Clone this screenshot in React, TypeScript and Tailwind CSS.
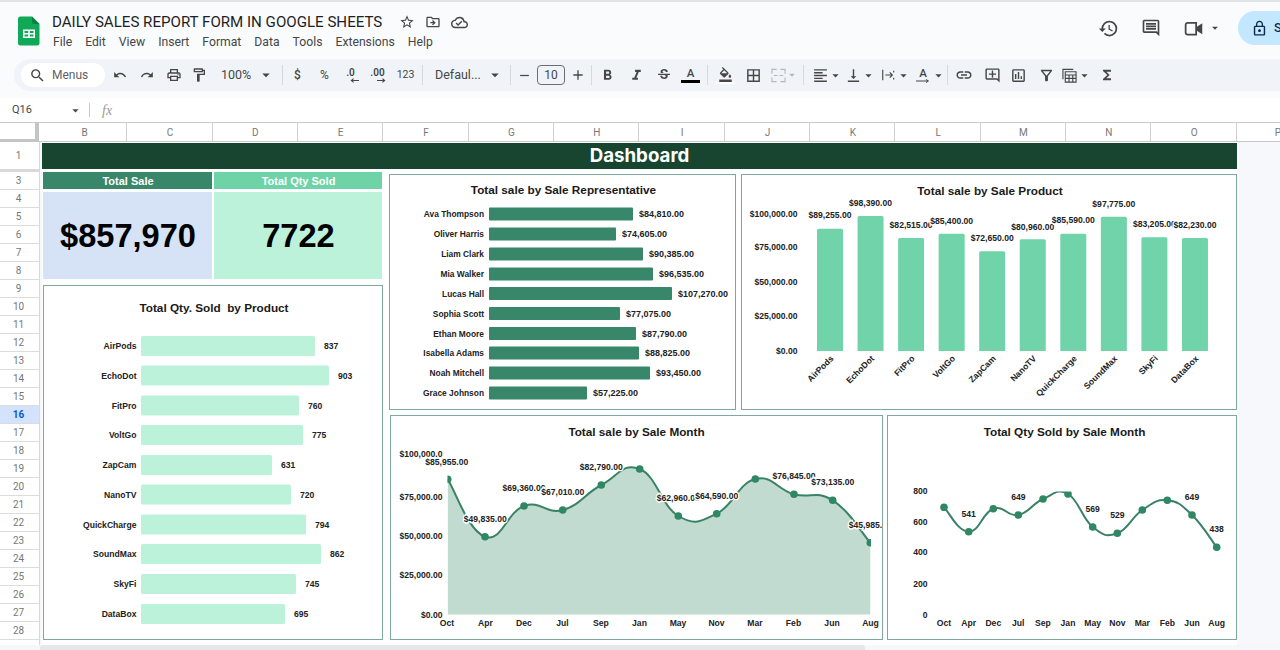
import React from 'react';
import {
    MdStarBorder, MdOutlineDriveFileMove, MdOutlineCloudDone, MdHistory, MdOutlineComment,
    MdArrowDropDown, MdLockOutline, MdSearch, MdUndo, MdRedo, MdOutlinePrint, MdOutlineFormatPaint, MdAdd, MdRemove,
    MdFormatBold, MdFormatItalic, MdStrikethroughS, MdOutlineFormatColorFill, MdBorderAll, MdFormatAlignLeft,
    MdVerticalAlignBottom, MdLink, MdOutlineAddComment, MdOutlineAssessment, MdOutlineFilterAlt, MdFunctions,
} from 'react-icons/md';

const columns = ['B', 'C', 'D', 'E', 'F', 'G', 'H', 'I', 'J', 'K', 'L', 'M', 'N', 'O'];
const rows = Array.from({length: 26}, (_, i) => i + 3);
const menu = ['File', 'Edit', 'View', 'Insert', 'Format', 'Data', 'Tools', 'Extensions', 'Help'];

const reps = [
    ['Ava Thompson', 214, 633, '$84,810.00'], ['Oliver Harris', 234, 616, '$74,605.00'],
    ['Liam Clark', 254, 643, '$90,385.00'], ['Mia Walker', 274, 653, '$96,535.00'],
    ['Lucas Hall', 293.5, 672, '$107,270.00'], ['Sophia Scott', 313.5, 620, '$77,075.00'],
    ['Ethan Moore', 333.5, 636, '$87,790.00'], ['Isabella Adams', 353, 639, '$88,825.00'],
    ['Noah Mitchell', 373, 650, '$93,450.00'], ['Grace Johnson', 393, 587, '$57,225.00'],
] as const;

const qtyProducts = [
    ['AirPods', 346, 315, '837'], ['EchoDot', 375.6, 329, '903'], ['FitPro', 405.6, 299, '760'],
    ['VoltGo', 435, 303, '775'], ['ZapCam', 465, 272, '631'], ['NanoTV', 494.6, 291, '720'],
    ['QuickCharge', 524.6, 306, '794'], ['SoundMax', 554, 321, '862'], ['SkyFi', 584, 296, '745'],
    ['DataBox', 614, 285, '695'],
] as const;

const saleProducts = [
    ['AirPods', 228.7, '$89,255.00', 214.7], ['EchoDot', 216, '$98,390.00', 203], ['FitPro', 238, '$82,515.00', 225],
    ['VoltGo', 233.7, '$85,400.00', 221], ['ZapCam', 251.3, '$72,650.00', 238], ['NanoTV', 239.3, '$80,960.00', 227],
    ['QuickCharge', 233.7, '$85,590.00', 220], ['SoundMax', 216.7, '$97,775.00', 203.7], ['SkyFi', 237.3, '$83,205.00', 224],
    ['DataBox', 238, '$82,230.00', 224.7],
] as const;

const months = ['Oct', 'Apr', 'Dec', 'Jul', 'Sep', 'Jan', 'May', 'Nov', 'Mar', 'Feb', 'Jun', 'Aug'];

const salePoints: [number, number][] = [
    [447.7, 479.3], [485, 536.7], [524, 506], [562.7, 510], [601.3, 485], [639.7, 469],
    [678.3, 516], [716.7, 513.7], [755.3, 479], [794, 494.3], [832.7, 500.3], [870.3, 542.7],
];
const saleLabels = [
    ['$69,360.00', 524, 488], ['$67,010.00', 562.7, 492], ['$85,955.00', 446.7, 462.3], ['$49,835.00', 485.3, 519],
    ['$82,790.00', 601.3, 467.3], ['$62,960.00', 678.3, 498], ['$64,590.00', 716.7, 495.7],
    ['$76,845.00', 794, 476], ['$73,135.00', 832.7, 482.3], ['$45,985.00', 870.3, 525],
] as const;

const qtyPoints: [number, number][] = [
    [944, 507.3], [968.7, 531.7], [993.3, 508.7], [1018.3, 515], [1043, 499], [1068, 494],
    [1092.7, 527], [1117.3, 533.3], [1142.3, 510], [1167.3, 500.3], [1192, 515], [1216.7, 547.3],
];
const qtyLabels = [
    ['541', 968.7, 513.7], ['649', 1018.3, 497.3], ['569', 1092.7, 509.3],
    ['529', 1117.3, 515], ['649', 1192, 497.3], ['438', 1216.7, 529.3],
] as const;

// catmull-rom through the points, same look as the sheets "smooth" line
function smooth(points: [number, number][]) {
    const k = 4.5;
    let d = `M${points[0][0]} ${points[0][1]}`;
    for (let i = 0; i < points.length - 1; i++) {
        const p0 = points[Math.max(i - 1, 0)];
        const p1 = points[i];
        const p2 = points[i + 1];
        const p3 = points[Math.min(i + 2, points.length - 1)];
        d += ` C${p1[0] + (p2[0] - p0[0]) / k} ${p1[1] + (p2[1] - p0[1]) / k} ${p2[0] - (p3[0] - p1[0]) / k} ${p2[1] - (p3[1] - p1[1]) / k} ${p2[0]} ${p2[1]}`;
    }
    return d;
}

const label = "fill-[#222222] text-[8.6px] font-bold";
const repLabel = "fill-[#222222] text-[8.4px] font-bold";
const repValue = "fill-[#222222] text-[9px] font-bold";
const halo = "fill-[#222222] text-[8.6px] font-bold stroke-white stroke-[2.5px] [paint-order:stroke]";

function ChartTitle({x, y, children}: { x: number, y: number, children: React.ReactNode }) {
    return <text x={x} y={y} textAnchor="middle" dominantBaseline="central" className="fill-[#1a1a1a] text-[11.75px] font-bold">{children}</text>;
}

function RepChart() {
    return (
        <svg viewBox="390 175 345 234" className="w-full h-full">
            <ChartTitle x={563.5} y={189}>Total sale by Sale Representative</ChartTitle>
            {reps.map(([name, y, end, value]) => (
                <g key={name}>
                    <text x={484} y={y} textAnchor="end" dominantBaseline="central" className={repLabel}>{name}</text>
                    <rect x={489} y={y - 6.5} width={end - 489} height={13} rx={1} className="fill-[#38876a]"/>
                    <text x={end + 6} y={y} dominantBaseline="central" className={repValue}>{value}</text>
                </g>
            ))}
        </svg>
    );
}

function QtyProductChart() {
    return (
        <svg viewBox="44 286 338 353" className="w-full h-full">
            <ChartTitle x={214} y={307}>Total Qty. Sold&#160; by Product</ChartTitle>
            {qtyProducts.map(([name, y, end, value]) => (
                <g key={name}>
                    <text x={136.5} y={y} textAnchor="end" dominantBaseline="central" className={label}>{name}</text>
                    <rect x={141} y={y - 10} width={end - 141} height={20} rx={1.5} className="fill-[#bcf2d9]"/>
                    <text x={end + 9} y={y} dominantBaseline="central" className={label}>{value}</text>
                </g>
            ))}
        </svg>
    );
}

function SaleProductChart() {
    const ticks = [['$100,000.00', 213.7], ['$75,000.00', 247.3], ['$50,000.00', 281.7], ['$25,000.00', 316.3], ['$0.00', 351]] as const;
    return (
        <svg viewBox="742 175 494 234" className="w-full h-full">
            <ChartTitle x={990} y={190}>Total sale by Sale Product</ChartTitle>
            {ticks.map(([t, y]) => (
                <text key={t} x={797.5} y={y} textAnchor="end" dominantBaseline="central" className={label}>{t}</text>
            ))}
            {saleProducts.map(([name, top], i) => {
                const cx = 830 + 40.55 * i;
                return (
                    <g key={name}>
                        <path d={`M${cx - 13} 351 V${top + 1.5} Q${cx - 13} ${top} ${cx - 11.5} ${top} H${cx + 11.5} Q${cx + 13} ${top} ${cx + 13} ${top + 1.5} V351 Z`} className="fill-[#70d3a9]"/>
                        <text x={cx + 2} y={357} textAnchor="end" dominantBaseline="central" transform={`rotate(-45 ${cx + 2} 357)`} className={label}>{name}</text>
                    </g>
                );
            })}
            {saleProducts.map(([name, , value, y], i) => (
                <text key={name} x={830 + 40.55 * i} y={y} textAnchor="middle" dominantBaseline="central" className={halo}>{value}</text>
            ))}
        </svg>
    );
}

function SaleMonthChart() {
    const ticks = [['$100,000.0', 453.7], ['$75,000.00', 497], ['$50,000.00', 536], ['$25,000.00', 575], ['$0.00', 614.5]] as const;
    const line = smooth(salePoints);
    return (
        <svg viewBox="391 416 491 223" className="w-full h-full">
            <defs>
                <clipPath id="saleClip"><rect x="447.5" y="440" width="423.5" height="175"/></clipPath>
            </defs>
            <ChartTitle x={636.5} y={431.5}>Total sale by Sale Month</ChartTitle>
            {ticks.map(([t, y]) => (
                <text key={t} x={442.5} y={y} textAnchor="end" dominantBaseline="central" className={label}>{t}</text>
            ))}
            <g clipPath="url(#saleClip)">
                <path d={`${line} V614.5 H447.7 Z`} className="fill-[#c1dbd0]"/>
                <path d={line} className="fill-none stroke-[#3a8266] stroke-2"/>
                {salePoints.map(([x, y]) => <circle key={x} cx={x} cy={y} r={3.8} className="fill-[#2f8763]"/>)}
            </g>
            {saleLabels.map(([t, x, y]) => (
                <text key={t} x={x} y={y} textAnchor="middle" dominantBaseline="central" className={halo}>{t}</text>
            ))}
            {months.map((m, i) => (
                <text key={m} x={447 + 38.5 * i} y={623} textAnchor="middle" dominantBaseline="central" className={label}>{m}</text>
            ))}
        </svg>
    );
}

function QtyMonthChart() {
    const ticks = [['800', 491], ['600', 521.7], ['400', 552], ['200', 583.7], ['0', 614.7]] as const;
    return (
        <svg viewBox="888 416 348 223" className="w-full h-full">
            <defs>
                <clipPath id="qtyClip"><rect x="930" y="491.5" width="300" height="123"/></clipPath>
            </defs>
            <ChartTitle x={1064.5} y={431.5}>Total Qty Sold by Sale Month</ChartTitle>
            {ticks.map(([t, y]) => (
                <text key={t} x={927.5} y={y} textAnchor="end" dominantBaseline="central" className={label}>{t}</text>
            ))}
            <g clipPath="url(#qtyClip)">
                <path d={smooth(qtyPoints)} className="fill-none stroke-[#3a8266] stroke-2"/>
                {qtyPoints.map(([x, y]) => <circle key={x} cx={x} cy={y} r={3.8} className="fill-[#2f8763]"/>)}
            </g>
            {qtyLabels.map(([t, x, y]) => (
                <text key={x} x={x} y={y} textAnchor="middle" dominantBaseline="central" className={label}>{t}</text>
            ))}
            {months.map((m, i) => (
                <text key={m} x={qtyPoints[i][0]} y={623} textAnchor="middle" dominantBaseline="central" className={label}>{m}</text>
            ))}
        </svg>
    );
}

function SheetsLogo() {
    return (
        <svg viewBox="0 0 22 30" className="w-[22px] h-[30px]">
            <path d="M2.5 0.5H14L21.5 8V27a2.5 2.5 0 0 1-2.5 2.5H2.5A2.5 2.5 0 0 1 0 27V3A2.5 2.5 0 0 1 2.5 .5Z" fill="#0fa958"/>
            <path d="M14 0.5L21.5 8H16a2 2 0 0 1-2-2Z" fill="#0b8043"/>
            <path d="M5 13.5H17V22H5ZM6.5 15V17H10.2V15ZM11.8 15V17H15.5V15ZM6.5 18.5V20.5H10.2V18.5ZM11.8 18.5V20.5H15.5V18.5Z" fill="#fff" fillRule="evenodd"/>
        </svg>
    );
}

function Btn({w = 'w-[27px]', children}: { w?: string, children: React.ReactNode }) {
    return <div className={`${w} h-full flex items-center justify-center shrink-0`}>{children}</div>;
}

function Sep() {
    return <div className="w-px h-[20px] bg-[#d5d9dd] shrink-0"/>;
}

function Caret({className = ''}: { className?: string }) {
    return <MdArrowDropDown className={`text-[18px] shrink-0 ${className}`}/>;
}

function Toolbar() {
    return (
        <div className="h-[32px] ml-[14px] rounded-l-[16px] bg-[#f0f4f9] flex items-center text-[#444746] mt-[1px]">
            <div className="ml-[7px] w-[84px] h-[24px] rounded-full bg-white flex items-center pl-[8px] gap-[6px] shrink-0">
                <MdSearch className="text-[17px]"/>
                <span className="text-[12px] text-[#5f6368]">Menus</span>
            </div>
            <Btn w="w-[29px]"><MdUndo className="text-[14px]"/></Btn>
            <Btn w="w-[26px]"><MdRedo className="text-[14px]"/></Btn>
            <Btn><MdOutlinePrint className="text-[16px]"/></Btn>
            <Btn w="w-[24px]"><MdOutlineFormatPaint className="text-[16px]"/></Btn>
            <div className="w-[71px] flex items-center pl-[10px] shrink-0">
                <span className="text-[12.5px]">100%</span>
                <Caret className="ml-[6px]"/>
            </div>
            <Sep/>
            <Btn w="w-[29px]"><span className="text-[12px] font-medium">$</span></Btn>
            <Btn w="w-[25px]"><span className="text-[12px]">%</span></Btn>
            <Btn>
                <div className="flex flex-col items-center leading-none">
                    <span className="text-[10px] font-semibold leading-[10px]">.0</span>
                    <svg viewBox="0 0 10 5" className="w-[9px] h-[5px] ml-[8px]"><path d="M10 2.5H2M4 .5L1.5 2.5 4 4.5" fill="none" stroke="#444746" strokeWidth="1.2"/></svg>
                </div>
            </Btn>
            <Btn>
                <div className="flex flex-col items-center leading-none">
                    <span className="text-[10px] font-semibold leading-[10px]">.00</span>
                    <svg viewBox="0 0 10 5" className="w-[9px] h-[5px] ml-[8px]"><path d="M0 2.5H8M6 .5L8.5 2.5 6 4.5" fill="none" stroke="#444746" strokeWidth="1.2"/></svg>
                </div>
            </Btn>
            <Btn w="w-[29px]"><span className="text-[10.5px]">123</span></Btn>
            <div className="ml-[2px]"><Sep/></div>
            <div className="w-[87px] flex items-center pl-[12px] shrink-0">
                <span className="text-[12.5px] w-[51px]">Defaul...</span>
                <Caret/>
            </div>
            <Sep/>
            <Btn w="w-[26px]"><MdRemove className="text-[15px]"/></Btn>
            <div className="w-[28px] h-[20px] rounded-[4px] border border-[#6b6f72] flex items-center justify-center text-[12px] shrink-0">10</div>
            <Btn w="w-[26px]"><MdAdd className="text-[16px]"/></Btn>
            <Sep/>
            <Btn w="w-[31px]"><MdFormatBold className="text-[17px]"/></Btn>
            <Btn><MdFormatItalic className="text-[17px]"/></Btn>
            <Btn><MdStrikethroughS className="text-[16px]"/></Btn>
            <Btn>
                <div className="flex flex-col items-center">
                    <span className="text-[11.5px] leading-[13px] font-medium">A</span>
                    <div className="w-[19px] h-[3px] bg-black"/>
                </div>
            </Btn>
            <div className="ml-[3px]"><Sep/></div>
            <Btn w="w-[34px]">
                <div className="flex flex-col items-center">
                    <MdOutlineFormatColorFill className="text-[15px]"/>
                    <div className="w-[19px] h-[2px] bg-white"/>
                </div>
            </Btn>
            <Btn w="w-[22px]"><MdBorderAll className="text-[17px]"/></Btn>
            <Btn w="w-[37px]">
                <svg viewBox="0 0 16 16" className="w-[15px] h-[15px]"><path d="M1 6V1.5H6M10 1.5H15V6M1 10V14.5H6M10 14.5H15V10M3 8H7M13 8H9" fill="none" stroke="#b4b8bb" strokeWidth="1.2"/></svg>
                <Caret className="text-[#b4b8bb] -ml-[1px] -mr-[4px] !text-[14px]"/>
            </Btn>
            <div className="w-[2px]"/>
            <Sep/>
            <div className="w-[39px] flex items-center pl-[8px] shrink-0">
                <MdFormatAlignLeft className="text-[17px] shrink-0"/>
                <Caret className="!text-[15px] -ml-[1px]"/>
            </div>
            <div className="w-[37px] flex items-center pl-[2px] shrink-0">
                <MdVerticalAlignBottom className="text-[17px] shrink-0"/>
                <Caret className="!text-[15px] -ml-[1px]"/>
            </div>
            <div className="w-[35px] flex items-center pl-[1px] shrink-0">
                <svg viewBox="0 0 16 16" className="w-[14px] h-[14px] shrink-0"><path d="M2 2V14M5 8H13M10 5L13 8 10 11M14.5 3V5M14.5 11V13" fill="none" stroke="#444746" strokeWidth="1.3"/></svg>
                <Caret className="!text-[15px] ml-[1px]"/>
            </div>
            <div className="w-[32px] flex items-center shrink-0">
                <div className="flex flex-col items-center w-[16px] shrink-0">
                    <span className="text-[11.5px] leading-[11px] font-medium">A</span>
                    <svg viewBox="0 0 14 4" className="w-[14px] h-[4px]"><path d="M0 2H12M10 .5L12.5 2 10 3.5" fill="none" stroke="#444746" strokeWidth="1"/></svg>
                </div>
                <Caret className="!text-[15px]"/>
            </div>
            <Sep/>
            <Btn w="w-[31px]"><MdLink className="text-[18px]"/></Btn>
            <Btn w="w-[26px]"><MdOutlineAddComment className="text-[17px]"/></Btn>
            <Btn><MdOutlineAssessment className="text-[17px]"/></Btn>
            <Btn w="w-[28px]"><MdOutlineFilterAlt className="text-[17px]"/></Btn>
            <div className="w-[36px] flex items-center pl-[2px] shrink-0">
                <svg viewBox="0 0 16 16" className="w-[15px] h-[15px] shrink-0"><path d="M1 12V1.5H12M3.5 4H15V15H3.5ZM3.5 7.5H15M3.5 11H15M7.5 7.5V15M11.5 7.5V15" fill="none" stroke="#444746" strokeWidth="1.2"/></svg>
                <Caret className="!text-[15px]"/>
            </div>
            <Btn w="w-[21px]"><MdFunctions className="text-[16px]"/></Btn>
        </div>
    );
}

function Header() {
    return (
        <div className="h-[98px] bg-[#f9fbfd] border-t-2 border-[#e3e3e3] shrink-0 overflow-hidden">
            <div className="h-[56px] flex">
                <div className="pl-[18px] pr-[12px] pt-[14px] shrink-0"><SheetsLogo/></div>
                <div className="pt-[10px] shrink-0">
                    <div className="flex items-center h-[20px]">
                        <span className="text-[15.1px] text-[#1f1f1f]">DAILY SALES REPORT FORM IN GOOGLE SHEETS</span>
                        <div className="flex items-center gap-[10px] ml-[17px] text-[#444746]">
                            <MdStarBorder className="text-[16px]"/>
                            <MdOutlineDriveFileMove className="text-[16px]"/>
                            <MdOutlineCloudDone className="text-[17px]"/>
                        </div>
                    </div>
                    <div className="flex gap-[13px] text-[12.2px] text-[#444746] mt-[1px] ml-[1px]">
                        {menu.map(m => <span key={m}>{m}</span>)}
                    </div>
                </div>
                <div className="ml-auto flex items-center h-[52px] text-[#444746] shrink-0 -mr-[20px]">
                    <MdHistory className="text-[21px] mr-[22px]"/>
                    <MdOutlineComment className="text-[20px] mr-[22px]"/>
                    <svg viewBox="0 0 24 24" className="w-[21px] h-[21px] shrink-0">
                        <path d="M3 8a2.5 2.5 0 0 1 2.5-2.5H15V19H5.5A2.5 2.5 0 0 1 3 16.5Z" fill="none" stroke="#444746" strokeWidth="2"/>
                        <path d="M15 10.5L22 6V18.500L15 14Z" fill="#444746"/>
                    </svg>
                    <Caret className="!text-[14px] ml-[4px] mr-[16px]"/>
                    <div className="w-[62px] h-[34px] rounded-l-full bg-[#c2e7ff] flex items-center pl-[13px] gap-[6px] text-[#0b2b4a]">
                        <MdLockOutline className="text-[17px] shrink-0"/>
                        <span className="text-[13px] font-medium">Share</span>
                    </div>
                </div>
            </div>
            <Toolbar/>
        </div>
    );
}

function FormulaBar() {
    return (
        <div className="h-[24px] bg-white flex items-center shrink-0 text-[#444746]">
            <span className="text-[11px] pl-[12px] w-[68px]">Q16</span>
            <Caret className="!text-[15px]"/>
            <div className="w-px h-[14px] bg-[#c7c7c7] ml-[6px]"/>
            <span className="ml-[12px] text-[14px] italic font-['Liberation_Serif',serif] text-[#9a9a9a]">fx</span>
        </div>
    );
}

function ColumnHeader() {
    return (
        <div className="h-[20px] flex shrink-0 border-t border-b border-[#c9c9c9] bg-white">
            <div className="w-[39px] bg-white border-r-[4px] border-b-[3px] border-[#c4c4c4] shrink-0 -mb-px"/>
            <div className="w-[3px] shrink-0"/>
            {columns.map(c => (
                <div key={c} className="w-[85.35px] shrink-0 border-r border-[#d0d0d0] flex items-center justify-center pl-[1px] text-[10px] text-[#777]">{c}</div>
            ))}
            <div className="flex-1 pl-[38px] flex items-center text-[10px] text-[#777]">P</div>
        </div>
    );
}

function RowHeader() {
    return (
        <div className="w-[40px] shrink-0 bg-white border-r border-[#d8d8d8]">
            <div className="h-[30px] border-b-[3px] border-[#d8d8d8] flex items-center justify-center pr-[2px] text-[10px] text-[#777]">1</div>
            {rows.map(r => (
                <div key={r} className={r === 16
                    ? "h-[18px] bg-[#d3e3fd] border-b border-[#dcdcdc] flex items-center justify-center pr-[2px] text-[10px] font-bold text-[#0b57d0]"
                    : "h-[18px] border-b border-[#dcdcdc] flex items-center justify-center pr-[2px] text-[10px] text-[#777]"}>{r}</div>
            ))}
        </div>
    );
}

function Card({className, children}: { className: string, children: React.ReactNode }) {
    return <div className={`${className} bg-white border border-[#7fa89e] shrink-0`}>{children}</div>;
}

function Dashboard() {
    return (
        <div className="flex-1 bg-[#f6f8fb] min-w-0">
            <div className="w-[1195px] ml-[2px] pt-px bg-white font-['Liberation_Sans',Arial,sans-serif] pb-[5px]">
                <div className="h-[26px] bg-[#17452f] flex items-center justify-center text-white text-[18.7px] font-bold font-['Inter',sans-serif]">Dashboard</div>
                <div className="flex pt-[3px] pl-[1px]">
                    <div className="w-[340px] shrink-0 flex flex-col">
                        <div className="grid grid-cols-[169px_168px] gap-x-[2px] gap-y-[3px] text-center">
                            <div className="h-[17px] bg-[#38876a] text-white text-[11px] font-bold flex items-center justify-center pl-[1px] pt-[1px]">Total Sale</div>
                            <div className="h-[17px] bg-[#6fd3a8] text-white text-[11px] font-bold flex items-center justify-center pl-[1px] pt-[1px]">Total Qty Sold</div>
                            <div className="h-[87px] bg-[#d6e3f6] text-black text-[32.6px] font-bold flex items-center justify-center pl-[1px] pt-[2px]">$857,970</div>
                            <div className="h-[87px] bg-[#bcf2d9] text-black text-[32.6px] font-bold flex items-center justify-center pl-[1px] pt-[2px]">7722</div>
                        </div>
                        <Card className="mt-[6px] h-[355px]"><QtyProductChart/></Card>
                    </div>
                    <div className="ml-[6px] pt-[2px] flex flex-col gap-[5px]">
                        <div className="flex gap-[5px]">
                            <Card className="w-[347px] h-[236px]"><RepChart/></Card>
                            <Card className="w-[496px] h-[236px]"><SaleProductChart/></Card>
                        </div>
                        <div className="flex gap-[4px] pl-[1px]">
                            <Card className="w-[493px] h-[225px]"><SaleMonthChart/></Card>
                            <Card className="w-[350px] h-[225px]"><QtyMonthChart/></Card>
                        </div>
                    </div>
                </div>
            </div>
        </div>
    );
}

export default function App() {
    return (
        <div className="w-[1280px] h-[650px] overflow-hidden flex flex-col bg-[#f6f8fb] font-['Roboto',sans-serif]">
            <Header/>
            <FormulaBar/>
            <ColumnHeader/>
            <div className="flex-1 flex min-h-0 overflow-hidden">
                <RowHeader/>
                <Dashboard/>
            </div>
            <div className="h-[5px] shrink-0 bg-[#f6f7f9] pl-[40px]">
                <div className="w-[825px] h-full bg-[#e6e7e9] rounded-t-[3px]"/>
            </div>
        </div>
    );
}
